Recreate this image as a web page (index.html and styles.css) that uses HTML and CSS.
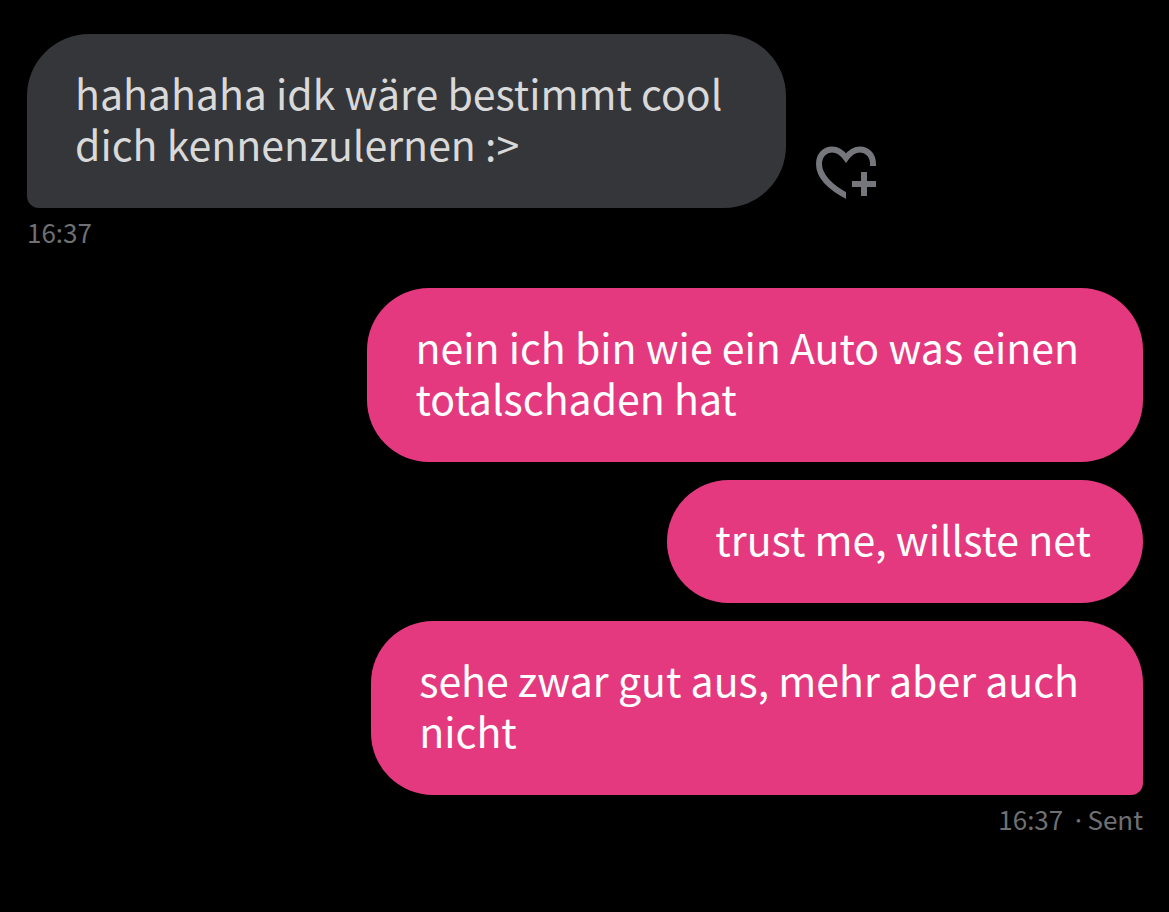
FILE: index.html
```html
<!DOCTYPE html>
<html lang="de">
<head>
  <meta charset="UTF-8" />
  <meta name="viewport" content="width=device-width, initial-scale=1" />
  <title>Chat</title>
  <link rel="stylesheet" href="styles.css">
</head>
<body>
  <main class="chat">
    <section class="group received">
      <div class="message-row">
        <p class="bubble wrapped tail">hahahaha idk wäre bestimmt cool<br>dich kennenzulernen :&gt;</p>
        <button class="react-btn" type="button" aria-label="React">
          <svg class="heart" viewBox="0 0 60 54" aria-hidden="true">
            <clipPath id="heart-left"><path d="M0 0H60V20H30V54H0Z" /></clipPath>
            <path clip-path="url(#heart-left)" d="M57 22V18C57 9 51 3.500 44 3.500C38 3.500 34 6.500 30 12C26 6.500 22 3.500 16 3.500C9 3.500 3 9 3 18C3 29 13 41 33 51" />
            <path d="M48 26V50M36 38H60" />
          </svg>
        </button>
      </div>
      <div class="meta"><time>16:37</time></div>
    </section>

    <section class="group sent">
      <p class="bubble wrapped">nein ich bin wie ein Auto was einen<br>totalschaden hat</p>
      <p class="bubble">trust me, willste net</p>
      <p class="bubble wrapped tail">sehe zwar gut aus, mehr aber auch<br>nicht</p>
      <div class="meta"><time>16:37</time><span class="status">·&#8202;Sent</span></div>
    </section>
  </main>
</body>
</html>
```
FILE: styles.css
```css
* {
  box-sizing: border-box;
}

body {
  margin: 0;
  min-height: 100vh;
  background: #000;
  color: #fff;
  font-family: "Noto Sans CJK JP", "Noto Sans", sans-serif;
}

.chat {
  display: flex;
  flex-direction: column;
  gap: 36px;
  padding: 34px 26px 34px 27px;
}

.group {
  display: flex;
  flex-direction: column;
  align-items: flex-start;
}

.message-row {
  display: flex;
  align-items: flex-end;
  gap: 30px;
}

.bubble {
  margin: 0;
  padding: 33px 52px 39px 48px;
  border-radius: 62px;
  font-size: 41px;
  line-height: 51px;
}

.bubble.wrapped {
  padding-right: 64px;
}

.received .bubble {
  background: #35363a;
  color: #d9d9d9;
}

.received .tail {
  border-bottom-left-radius: 12px;
}

.sent {
  align-items: flex-end;
  gap: 18px;
}

.sent .bubble {
  background: #e4397f;
}

.sent .tail {
  border-bottom-right-radius: 12px;
}

.react-btn {
  padding: 0 0 8px;
  border: none;
  background: none;
  color: #76777c;
  cursor: pointer;
}

.heart {
  display: block;
  width: 60px;
  height: 54px;
  fill: none;
  stroke: currentColor;
  stroke-width: 6;
}

.meta {
  display: flex;
  gap: 8px;
  color: #6e7074;
  font-size: 26px;
  line-height: 36px;
}

.received .meta {
  padding: 6px 0 2px;
}

.sent .meta {
  margin-top: -12px;
}
```
